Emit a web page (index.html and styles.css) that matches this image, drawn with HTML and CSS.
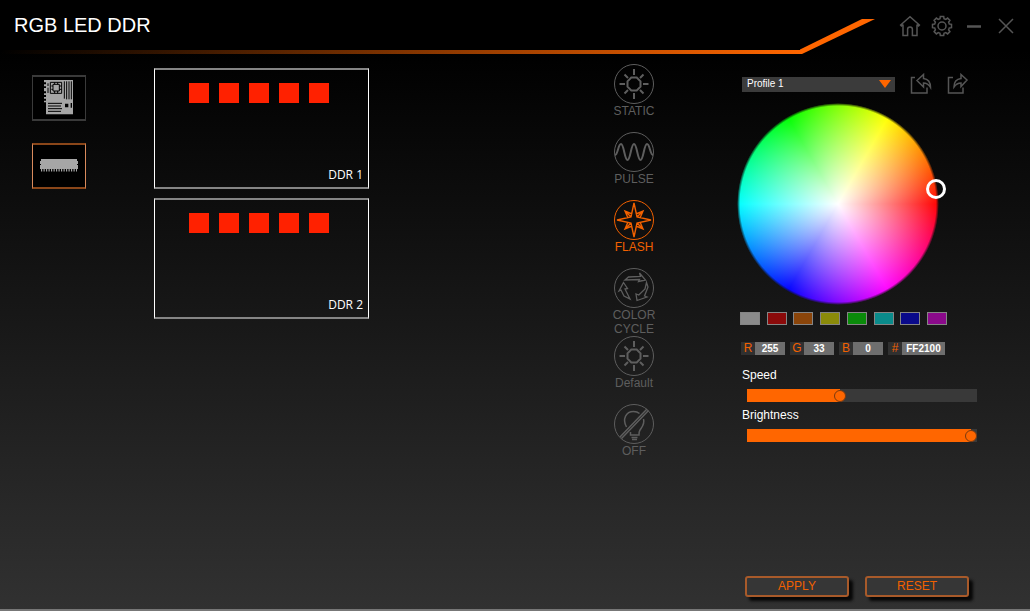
FILE: index.html
```html
<!DOCTYPE html>
<html lang="en">
<head>
<meta charset="utf-8">
<meta name="viewport" content="width=device-width, initial-scale=1">
<title>RGB LED DDR</title>
<link rel="stylesheet" href="styles.css">
</head>
<body>
<div class="app">
  <header class="header">
    <h1 class="title">RGB LED DDR</h1>
    <div class="header-rule"></div>
    <svg class="header-tail" viewBox="0 0 75 35" aria-hidden="true"><path d="M0 30.500 62 0H75L2 35H0z" fill="#ff6600"/></svg>
    <nav class="window-controls" aria-label="Window">
      <button class="icon-button" type="button" aria-label="Home"><svg class="icon" viewBox="0 0 24 24"><path d="M5 10.500 3.400 12 2.600 11 12 2.700 21.400 11 20.600 12 19 10.500M5 10.500v11h4.600v-6.200a2.400 2.400 0 0 1 4.800 0v6.200H19v-11"/></svg></button>
      <button class="icon-button" type="button" aria-label="Settings"><svg class="icon" viewBox="0 0 24 24"><path d="M19.300 10 21.500 10.300V13.700L19.300 14 18.600 15.800 19.900 17.600 17.600 19.900 15.800 18.600 14 19.300 13.700 21.500H10.300L10 19.300 8.200 18.600 6.400 19.900 4.100 17.600 5.400 15.800 4.700 14 2.500 13.700V10.300L4.700 10 5.400 8.200 4.100 6.400 6.400 4.100 8.200 5.400 10 4.700 10.300 2.500H13.700L14 4.700 15.800 5.400 17.600 4.100 19.900 6.400 18.600 8.200z"/><circle cx="12" cy="12" r="4"/></svg></button>
      <button class="icon-button" type="button" aria-label="Minimize"><svg class="icon" viewBox="0 0 24 24"><path d="M5 12.500h14" stroke-width="2.500"/></svg></button>
      <button class="icon-button" type="button" aria-label="Close"><svg class="icon" viewBox="0 0 24 24"><path d="m5 5 14 14M19 5 5 19"/></svg></button>
    </nav>
  </header>

  <main class="main">
    <nav class="devices" aria-label="Devices">
      <button class="device" type="button" aria-label="Motherboard">
        <svg class="board-icon" viewBox="72 58 90 105">
          <path fill="#a6a6a6" d="M72 58h87v103H78v-36h-6v-5h6v-6h-6v-5h6v-6h-6v-5h6v-6h-6V82h6v-5h-6v-6h6v-6h-6z"/>
          <path fill="none" stroke="#000" stroke-width="3" d="M91 65h34v33H91zM84 68v8m0 5v16M99 71h19v20H99zM94 76h5m-5 10h5m19-10h7m-7 10h7M104 65v6m9-6v6m-9 20v7m9-7v7M133 62v52m7-52v54m7-54v54m7-54v54M84 128h42M84 136h39M84 144h42M84 152h39"/>
          <path d="M135 129h10v11h-10zM152 127h4v14h-4z"/>
        </svg>
      </button>
      <button class="device device-active" type="button" aria-label="Memory">
        <svg class="ram-icon" viewBox="0 0 38 13">
          <path fill="#a6a6a6" d="M1 0h36v2h1v3h-1v1h1v4H0V6h1V5H0V2h1z"/>
          <path stroke="#a6a6a6" stroke-width="3" stroke-dasharray="1.200 1.300" d="M1 11h36"/>
        </svg>
      </button>
    </nav>

    <section class="zones" aria-label="Memory modules">
      <article class="zone">
        <div class="leds"><i class="led"></i><i class="led"></i><i class="led"></i><i class="led"></i><i class="led"></i></div>
        <h2 class="zone-name">DDR 1</h2>
      </article>
      <article class="zone">
        <div class="leds"><i class="led"></i><i class="led"></i><i class="led"></i><i class="led"></i><i class="led"></i></div>
        <h2 class="zone-name">DDR 2</h2>
      </article>
    </section>

    <section class="effects" aria-label="Effects">
      <button class="effect" type="button">
        <svg class="effect-icon" viewBox="0 0 40 40"><circle cx="20" cy="20" r="19.500"/><path stroke-width="2" d="M17.300 13.500h5.400l3.800 3.800v5.400l-3.800 3.800h-5.400l-3.800-3.800v-5.400zM20 5v6M20 29v6M5.500 20H11M29 20h5.500M10.500 10.500l3.500 3.500M26 26l3.500 3.500M29.500 10.500 26 14M14 26l-3.500 3.500"/></svg>
        <span>STATIC</span>
      </button>
      <button class="effect" type="button">
        <svg class="effect-icon" viewBox="0 0 40 40"><circle cx="20" cy="20" r="19.500"/><path stroke-width="2" d="M1 23C4 23 4 12 7 12S10.500 28 13.500 28 17 12 20 12 23.500 28 26.500 28 30 12 33 12 36 23 39 23"/></svg>
        <span>PULSE</span>
      </button>
      <button class="effect effect-active" type="button" aria-pressed="true">
        <svg class="effect-icon" viewBox="0 0 40 40"><circle cx="20" cy="20" r="19.500"/><path stroke-width="1.400" d="M20 3 23 17 37 20 23 23 20 37 17 23 3 20 17 17zM18 14 11 11 14 18M22 14 29 11 26 18M18 26 11 29 14 22M22 26 29 29 26 22M12 12l5 5M28 12l-5 5M12 28l5-5M28 28l-5-5"/></svg>
        <span>FLASH</span>
      </button>
      <button class="effect" type="button">
        <svg class="effect-icon" viewBox="0 0 40 40"><circle cx="20" cy="20" r="19.500"/><path stroke-width="1.300" d="M11 12 14.500 9 26.500 8.500 25.500 5 31.500 12 24.500 13.500 25.500 11.500zM32.500 14.500 34 19 30.500 28 33 29 23 32.500 22 26 24.800 27 31 21zM9.500 14.500 13.500 20.500 11 21 16 31 10 28 7 22 5 23z"/></svg>
        <span>COLOR CYCLE</span>
      </button>
      <button class="effect" type="button">
        <svg class="effect-icon" viewBox="0 0 40 40"><circle cx="20" cy="20" r="19.500"/><path stroke-width="2" d="M17.300 13.500h5.400l3.800 3.800v5.400l-3.800 3.800h-5.400l-3.800-3.800v-5.400zM20 5v6M20 29v6M5.500 20H11M29 20h5.500M10.500 10.500l3.500 3.500M26 26l3.500 3.500M29.500 10.500 26 14M14 26l-3.500 3.500"/></svg>
        <span>Default</span>
      </button>
      <button class="effect" type="button">
        <svg class="effect-icon" viewBox="0 0 40 40"><circle cx="20" cy="20" r="19.500"/><path stroke-width="1.500" d="M12.500 23C8 15 12 7.500 19.500 7.500c3 0 4.500.7 6 2M29.500 15c1.500 5-1.500 8-3.500 11-1 1.500-1 3-1 5h-8.500v-3M6 33 33 5M7.500 34.500 34.500 6.500M17.500 33.500h6M18 35.500h5"/></svg>
        <span>OFF</span>
      </button>
    </section>

    <section class="panel" aria-label="Color">
      <div class="profile-row">
        <div class="profile">
          <select class="profile-select" aria-label="Profile"><option>Profile 1</option></select>
          <svg class="profile-arrow" viewBox="0 0 12 8" aria-hidden="true"><path d="M0 0h12L6 8z" fill="#ff6600"/></svg>
        </div>
        <button class="file-button" type="button" aria-label="Import profile"><svg class="file-icon" viewBox="0 0 22 22"><path d="M5 4.500H1.500v15.500H17v-5.500M7 7.500 13.500 1.500v4c4.500.5 7 3.500 7 9-2-3.500-4-4.500-7-4.500v4z"/></svg></button>
        <button class="file-button" type="button" aria-label="Export profile"><svg class="file-icon" viewBox="0 0 22 22"><path d="M6 4.500H1.500v15.500H16v-5.500M20 7 14 1.500v4c-4.500.5-7 3-7 8.500 2-3 4-4 7-4v3.500z"/></svg></button>
      </div>
      <div class="wheel"><div class="wheel-disc"></div><button class="wheel-handle" type="button" aria-label="Selected color"></button></div>
      <div class="swatches">
        <button class="swatch swatch-gray" type="button" aria-label="Gray"></button>
        <button class="swatch swatch-red" type="button" aria-label="Red"></button>
        <button class="swatch swatch-orange" type="button" aria-label="Orange"></button>
        <button class="swatch swatch-yellow" type="button" aria-label="Yellow"></button>
        <button class="swatch swatch-green" type="button" aria-label="Green"></button>
        <button class="swatch swatch-cyan" type="button" aria-label="Cyan"></button>
        <button class="swatch swatch-blue" type="button" aria-label="Blue"></button>
        <button class="swatch swatch-magenta" type="button" aria-label="Magenta"></button>
      </div>
      <div class="channels">
        <div class="channel"><label for="r">R</label><input id="r" value="255"></div>
        <div class="channel"><label for="g">G</label><input id="g" value="33"></div>
        <div class="channel"><label for="b">B</label><input id="b" value="0"></div>
        <div class="channel channel-hex"><label for="hex">#</label><input id="hex" value="FF2100"></div>
      </div>
      <div class="sliders">
        <label class="slider-label" for="speed">Speed</label>
        <input class="slider" id="speed" type="range" min="0" max="10" value="4" style="--level: 0.4">
        <label class="slider-label" for="brightness">Brightness</label>
        <input class="slider" id="brightness" type="range" min="0" max="10" value="10" style="--level: 1">
      </div>
      <div class="actions">
        <button class="action" type="button">APPLY</button>
        <button class="action" type="button">RESET</button>
      </div>
    </section>
  </main>
</div>
</body>
</html>
```
FILE: styles.css
```css
* {
  box-sizing: border-box;
}

body {
  margin: 0;
  background: #000;
  color: #fff;
  font-family: "Liberation Sans", Arial, sans-serif;
  font-size: 12px;
  line-height: 14px;
}

button,
input,
select {
  margin: 0;
  padding: 0;
  border: 0;
  border-radius: 0;
  background: none;
  color: inherit;
  font: inherit;
}

svg {
  display: block;
}

.app {
  display: flex;
  flex-direction: column;
  min-height: 100vh;
  border-bottom: 2px solid #777;
  background: linear-gradient(#000 50px, #313131);
}

/* Header */
.header {
  display: grid;
  grid-template-columns: 1fr 75px 155px;
  grid-template-rows: 50px 4px;
}

.title {
  grid-area: 1 / 1;
  align-self: center;
  margin: 0;
  padding-left: 14px;
  font-size: 20px;
  font-weight: 400;
  line-height: 24px;
}

.header-rule {
  grid-area: 2 / 1;
  background: linear-gradient(90deg, transparent, #ff6600);
}

.header-tail {
  grid-area: 1 / 2 / 3 / 3;
  align-self: end;
  width: 75px;
  height: 35px;
}

.window-controls {
  grid-area: 1 / 3;
  display: flex;
  align-items: center;
  justify-content: flex-end;
  padding: 2px 8px 0 0;
}

.icon-button {
  display: grid;
  place-items: center;
  width: 32px;
  height: 32px;
}

.icon {
  width: 24px;
  height: 24px;
  fill: none;
  stroke: #555;
  stroke-width: 1.5;
}

/* Columns */
.main {
  flex: 1;
  display: grid;
  grid-template-columns: 54px 283px 1fr 48px 372px;
  padding-left: 32px;
}

.devices {
  display: flex;
  flex-direction: column;
  gap: 22px;
  padding-top: 21px;
}

.device {
  display: grid;
  place-items: center;
  height: 46px;
  padding-bottom: 2px;
  border: solid #3a3a3a;
  border-width: 2px 1px;
  background: #000;
}

.device-active {
  border-color: #8a4619 #d98a5c;
}

.board-icon {
  width: 30px;
  height: 35px;
}

.ram-icon {
  width: 38px;
  height: 13px;
}

.zones {
  display: flex;
  flex-direction: column;
  gap: 9px;
  padding: 14px 0 0 68px;
}

.zone {
  display: flex;
  flex-direction: column;
  justify-content: space-between;
  height: 121px;
  padding: 13px 5px 4px;
  border: solid #fff;
  border-width: 2px 1px;
  border-color: #858585 #fff;
}

.leds {
  display: flex;
  justify-content: center;
  gap: 10px;
  padding-right: 6px;
}

.led {
  width: 20px;
  height: 20px;
  background: #ff2100;
}

.zone-name {
  margin: 0;
  font-family: "Open Sans", "Noto Sans", sans-serif;
  font-size: 12px;
  font-weight: 400;
  line-height: 16px;
  text-align: right;
}

.effects {
  grid-column: 4;
  display: grid;
  grid-auto-rows: 68px;
  align-content: start;
  padding-top: 10px;
}

.effect {
  display: flex;
  flex-direction: column;
  align-items: center;
  color: #5e5e5e;
  text-align: center;
}

.effect-active {
  color: #f26100;
}

.effect-icon {
  flex: none;
  width: 40px;
  height: 40px;
  fill: none;
  stroke: currentColor;
}

/* Color panel */
.panel {
  grid-column: 5;
  display: flex;
  flex-direction: column;
  padding: 19px 53px 12px 79px;
}

.profile-row {
  display: flex;
  align-items: center;
  padding-left: 5px;
}

.profile {
  display: grid;
  align-items: center;
  width: 153px;
  margin-right: 15px;
}

.profile-select {
  grid-area: 1 / 1;
  width: 100%;
  height: 15px;
  padding: 0 5px;
  appearance: none;
  background: #3b3b3b;
  font-size: 10px;
}

.profile-arrow {
  grid-area: 1 / 1;
  justify-self: end;
  width: 12px;
  height: 8px;
  margin-right: 4px;
  pointer-events: none;
}

.file-button + .file-button {
  margin-left: 15px;
}

.file-icon {
  width: 22px;
  height: 22px;
  fill: none;
  stroke: #555;
  stroke-width: 1.5;
}

.wheel {
  position: relative;
  width: 202px;
  height: 202px;
  margin-top: 8px;
}

.wheel-disc {
  height: 100%;
  border-radius: 50%;
  background:
    radial-gradient(closest-side, #fff, rgba(255, 255, 255, 0)),
    conic-gradient(from 90deg, #f00, #f0f, #00f, #0ff, #0f0, #ff0, #f00);
  mask-image: radial-gradient(closest-side, #000 calc(100% - 3px), transparent);
}

.wheel-handle {
  position: absolute;
  left: 189px;
  top: 76px;
  width: 20px;
  height: 20px;
  border: 3px solid #fff;
  border-radius: 50%;
}

.swatches {
  display: flex;
  justify-content: space-between;
  width: 207px;
  margin: 7px 0 0 3px;
}

.swatch {
  width: 20px;
  height: 13px;
  border: 1px solid #858585;
}

.swatch-gray { background: #8b8b8b; }
.swatch-red { background: #8b0a0a; }
.swatch-orange { background: #8b450a; }
.swatch-yellow { background: #8b8b0a; }
.swatch-green { background: #0a8b0a; }
.swatch-cyan { background: #0a8b8b; }
.swatch-blue { background: #0a0a8b; }
.swatch-magenta { background: #8b0a8b; }

.channels {
  display: flex;
  gap: 5px;
  margin: 17px 0 0 4px;
}

.channel {
  display: flex;
  height: 13px;
  line-height: 13px;
}

.channel label {
  width: 14px;
  background: #303030;
  color: #f26100;
  text-align: center;
}

.channel input {
  width: 30px;
  height: 13px;
  background: #6e6e6e;
  font-size: 10px;
  font-weight: 700;
  text-align: center;
}

.channel-hex input {
  width: 43px;
}

.sliders {
  display: flex;
  flex-direction: column;
  padding-left: 5px;
}

.slider-label {
  margin-top: 6px;
}

.slider-label:first-child {
  margin-top: 13px;
}

.slider {
  height: 13px;
  margin: 7px 0 0 5px;
  appearance: none;
  background: linear-gradient(90deg, #ff6600 calc(6px + (100% - 12px) * var(--level)), #393939 0);
}

.slider::-webkit-slider-thumb {
  appearance: none;
  width: 12px;
  height: 12px;
  border: 1px solid #7a3a10;
  border-radius: 50%;
  background: #ff6600;
}

.actions {
  display: flex;
  gap: 16px;
  margin-top: auto;
  padding: 16px 0 0 8px;
}

.action {
  width: 104px;
  height: 21px;
  border: 2px solid #a85a2a;
  border-radius: 3px;
  background: #363636;
  box-shadow: 4px 4px 3px #080808;
  color: #f26100;
  line-height: 17px;
}
```
